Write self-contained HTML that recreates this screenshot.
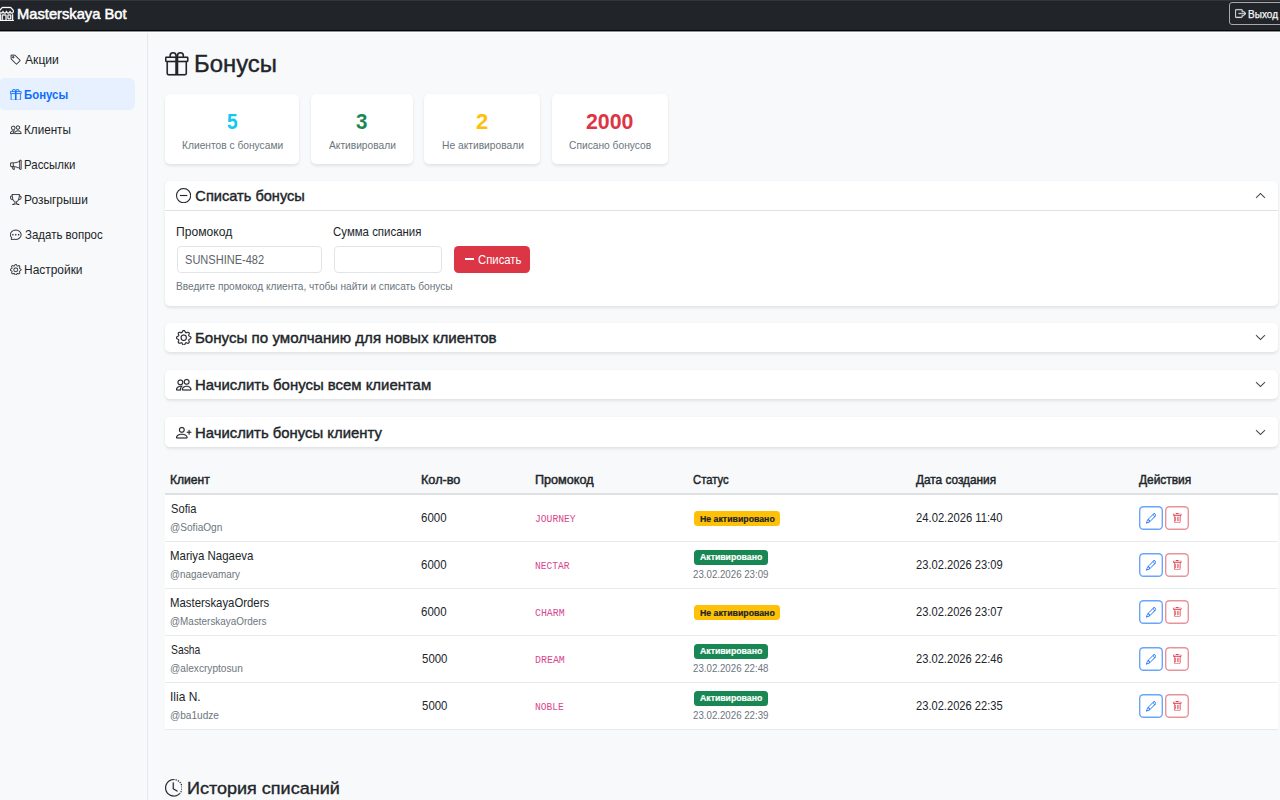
<!DOCTYPE html>
<html lang="ru">
<head>
<meta charset="utf-8">
<title>Masterskaya Bot — Бонусы</title>
<style>
*{box-sizing:border-box;margin:0;padding:0}
html,body{width:1280px;height:800px;overflow:hidden}
body{position:relative;background:#f8f9fa;font-family:"Liberation Sans",sans-serif;color:#212529}
.a{position:absolute;display:block}
.t{position:absolute;white-space:nowrap;line-height:1}
#nav{position:absolute;left:0;top:0;width:1280px;height:33px;background:#212529}
#nav .top{position:absolute;left:0;top:0;width:1280px;height:1px;background:#33373b}
#nav .b1{position:absolute;left:0;top:30px;width:1280px;height:1px;background:#05070a}
#nav .b2{position:absolute;left:0;top:31px;width:1280px;height:1px;background:#8c8e90}
#nav .b3{position:absolute;left:0;top:32px;width:1280px;height:1px;background:#fff}
#logout{position:absolute;left:1229px;top:2px;width:70px;height:23px;border:1px solid #a7a9ab;border-radius:3px}
#side{position:absolute;left:0;top:33px;width:148px;height:767px;background:#f8f9fa;border-right:1px solid #e6e8eb}
.pill{position:absolute;background:#e6f0fe;border-radius:6px}
.card{position:absolute;background:#fff;border-radius:5px;box-shadow:0 1.5px 3px rgba(0,0,0,.09)}
.inp{position:absolute;background:#fff;border:1px solid #e2e5e8;border-radius:4px}
.badge{position:absolute;height:15px;border-radius:3.5px}
.bw{background:#ffc107}
.bs{background:#198754}
.be{position:absolute;width:24px;height:24px;box-shadow:inset 0 0 0 1.4px #6aa5fd;border-radius:4.5px}
.bd{position:absolute;width:24px;height:24px;box-shadow:inset 0 0 0 1.4px #e8939a;border-radius:4.5px}

</style>
</head>
<body>
<div id="nav"><div class="top"></div>
<svg class="a" style="left:-1px;top:5.5px;" width="15" height="15" viewBox="0 0 16 16" fill="#fff" stroke="#fff" stroke-width="0.35"><path d="M2.97 1.35A1 1 0 0 1 3.73 1h8.54a1 1 0 0 1 .76.35l2.609 3.044A1.5 1.5 0 0 1 16 5.37v.255a2.375 2.375 0 0 1-4.25 1.458A2.37 2.37 0 0 1 9.875 8 2.37 2.37 0 0 1 8 7.083 2.37 2.37 0 0 1 6.125 8a2.37 2.37 0 0 1-1.875-.917A2.375 2.375 0 0 1 0 5.625V5.37a1.5 1.5 0 0 1 .361-.976zm1.78 4.275a1.375 1.375 0 0 0 2.75 0 .5.5 0 0 1 1 0 1.375 1.375 0 0 0 2.75 0 .5.5 0 0 1 1 0 1.375 1.375 0 1 0 2.75 0V5.37a.5.5 0 0 0-.12-.325L12.27 2H3.73L1.12 5.045A.5.5 0 0 0 1 5.37v.255a1.375 1.375 0 0 0 2.75 0 .5.5 0 0 1 1 0M1.5 8.5A.5.5 0 0 1 2 9v6h1v-5a1 1 0 0 1 1-1h3a1 1 0 0 1 1 1v5h6V9a.5.5 0 0 1 1 0v6h.5a.5.5 0 0 1 0 1H.5a.5.5 0 0 1 0-1H1V9a.5.5 0 0 1 .5-.5M4 15h3v-5H4zm5-5a1 1 0 0 1 1-1h2a1 1 0 0 1 1 1v3a1 1 0 0 1-1 1h-2a1 1 0 0 1-1-1zm3 0h-2v3h2z"/></svg>
<div class="t" style='left:17.01px;top:6.75px;font-size:14.5px;color:#fff;transform:scaleX(1.0151);transform-origin:1.19px 0;-webkit-text-stroke:0.5px #fff;'>Masterskaya Bot</div>
<div id="logout"></div>
<svg class="a" style="left:1234.5px;top:8px;" width="11" height="11" viewBox="0 0 16 16" fill="#e9ecef" stroke="#e9ecef" stroke-width="0.7"><path d="M10 12.5a.5.5 0 0 1-.5.5h-8a.5.5 0 0 1-.5-.5v-9a.5.5 0 0 1 .5-.5h8a.5.5 0 0 1 .5.5v2a.5.5 0 0 0 1 0v-2A1.5 1.5 0 0 0 9.5 2h-8A1.5 1.5 0 0 0 0 3.5v9A1.5 1.5 0 0 0 1.5 14h8a1.5 1.5 0 0 0 1.5-1.5v-2a.5.5 0 0 0-1 0z"/><path d="M15.854 8.354a.5.5 0 0 0 0-.708l-3-3a.5.5 0 0 0-.708.708L14.293 7.5H5.5a.5.5 0 0 0 0 1h8.793l-2.147 2.146a.5.5 0 0 0 .708.708z"/></svg>
<div class="t" style='left:1248.10px;top:8.80px;font-size:11px;color:#f8f9fa;transform:scaleX(0.9113);transform-origin:0.90px 0;-webkit-text-stroke:0.25px #f8f9fa;'>Выход</div>
<div class="b1"></div><div class="b2"></div><div class="b3"></div></div>
<div id="side"></div>
<div class="pill" style="left:-1px;top:78px;width:136px;height:32px"></div>
<svg class="a" style="left:10px;top:53.5px;" width="11.5" height="11.5" viewBox="0 0 16 16" fill="#212529" stroke="#212529" stroke-width="0.2"><path d="M6 4.5a1.5 1.5 0 1 1-3 0 1.5 1.5 0 0 1 3 0m-1 0a.5.5 0 1 0-1 0 .5.5 0 0 0 1 0"/><path d="M2 1h4.586a1 1 0 0 1 .707.293l7 7a1 1 0 0 1 0 1.414l-4.586 4.586a1 1 0 0 1-1.414 0l-7-7A1 1 0 0 1 1 6.586V2a1 1 0 0 1 1-1m0 5.586 7 7L13.586 9l-7-7H2z"/></svg>
<div class="t" style='left:24.98px;top:53.90px;font-size:12.2px;color:#212529;transform:scaleX(0.9944);transform-origin:0.02px 0;'>Акции</div>
<svg class="a" style="left:10px;top:88.5px;" width="11.5" height="11.5" viewBox="0 0 16 16" fill="#0d6efd" stroke="#0d6efd" stroke-width="0.2"><path d="M3 2.5a2.5 2.5 0 0 1 5 0 2.5 2.5 0 0 1 5 0v.006c0 .07 0 .27-.038.494H15a1 1 0 0 1 1 1v2a1 1 0 0 1-1 1v7.5a1.5 1.5 0 0 1-1.5 1.5h-11A1.5 1.5 0 0 1 1 14.5V7a1 1 0 0 1-1-1V4a1 1 0 0 1 1-1h2.038A3 3 0 0 1 3 2.506zm1.068.5H7v-.5a1.5 1.5 0 1 0-3 0c0 .085.002.274.045.43zM9 3h2.932l.023-.07c.043-.156.045-.345.045-.43a1.5 1.5 0 0 0-3 0zM1 4v2h6V4zm8 0v2h6V4zm5 3H9v8h4.5a.5.5 0 0 0 .5-.5zm-7 8V7H2v7.5a.5.5 0 0 0 .5.5z"/></svg>
<div class="t" style='left:24.18px;top:88.90px;font-size:12.2px;color:#0d6efd;font-weight:700;transform:scaleX(0.9329);transform-origin:0.82px 0;'>Бонусы</div>
<svg class="a" style="left:10px;top:123.5px;" width="11.5" height="11.5" viewBox="0 0 16 16" fill="#212529" stroke="#212529" stroke-width="0.2"><path d="M15 14s1 0 1-1-1-4-5-4-5 3-5 4 1 1 1 1zm-7.978-1L7 12.996c.001-.264.167-1.03.76-1.72C8.312 10.629 9.282 10 11 10c1.717 0 2.687.63 3.24 1.276.593.69.758 1.457.76 1.72l-.008.002-.014.002zM11 7a2 2 0 1 0 0-4 2 2 0 0 0 0 4m3-2a3 3 0 1 1-6 0 3 3 0 0 1 6 0M6.936 9.28a6 6 0 0 0-1.23-.247A7 7 0 0 0 5 9c-4 0-5 3-5 4q0 1 1 1h4.216A2.24 2.24 0 0 1 5 13c0-1.01.377-2.042 1.09-2.904.243-.294.526-.569.846-.816M4.92 10A5.5 5.5 0 0 0 4 13H1c0-.26.164-1.03.76-1.724.545-.636 1.492-1.256 3.16-1.275ZM1.5 5.5a3 3 0 1 1 6 0 3 3 0 0 1-6 0m3-2a2 2 0 1 0 0 4 2 2 0 0 0 0-4"/></svg>
<div class="t" style='left:24.00px;top:123.90px;font-size:12.2px;color:#212529;transform:scaleX(0.9570);transform-origin:1.00px 0;'>Клиенты</div>
<svg class="a" style="left:10px;top:158.5px;" width="11.5" height="11.5" viewBox="0 0 16 16" fill="#212529" stroke="#212529" stroke-width="0.2"><path d="M13 2.5a1.5 1.5 0 0 1 3 0v11a1.5 1.5 0 0 1-3 0v-.214c-2.162-1.241-4.49-1.843-6.912-2.083l.405 2.712A1 1 0 0 1 5.51 15.1h-.548a1 1 0 0 1-.916-.599l-1.85-3.49-.202-.003A2.014 2.014 0 0 1 0 9V7a2.02 2.02 0 0 1 1.992-2.013 75 75 0 0 0 2.483-.075c3.043-.154 6.148-.849 8.525-2.199zm1 0v11a.5.5 0 0 0 1 0v-11a.5.5 0 0 0-1 0m-1 1.35c-2.344 1.205-5.209 1.842-8 2.033v4.233q.27.015.537.036c2.568.189 5.093.744 7.463 1.993zm-9 6.215v-4.13a95 95 0 0 1-1.992.052A1.02 1.02 0 0 0 1 7v2c0 .55.448 1.002 1.006 1.009A61 61 0 0 1 4 10.065m-.657.975 1.609 3.037.01.024h.548l-.002-.014-.443-2.966a68 68 0 0 0-1.722-.082z"/></svg>
<div class="t" style='left:24.00px;top:158.90px;font-size:12.2px;color:#212529;transform:scaleX(0.9365);transform-origin:1.00px 0;'>Рассылки</div>
<svg class="a" style="left:10px;top:193.5px;" width="11.5" height="11.5" viewBox="0 0 16 16" fill="#212529" stroke="#212529" stroke-width="0.2"><path d="M2.5.5A.5.5 0 0 1 3 0h10a.5.5 0 0 1 .5.5q0 .807-.034 1.536a3 3 0 1 1-1.133 5.89c-.79 1.865-1.878 2.777-2.833 3.011v2.173l1.425.356c.194.048.377.135.537.255L13.3 15.1a.5.5 0 0 1-.3.9H3a.5.5 0 0 1-.3-.9l1.838-1.379c.16-.12.343-.207.537-.255L6.5 13.11v-2.173c-.955-.234-2.043-1.146-2.833-3.012a3 3 0 1 1-1.132-5.89A33 33 0 0 1 2.5.5m.099 2.54a2 2 0 0 0 .72 3.935c-.333-1.05-.588-2.346-.72-3.935m10.083 3.935a2 2 0 0 0 .72-3.935c-.133 1.59-.388 2.885-.72 3.935M3.504 1q.01.775.056 1.469c.13 2.028.457 3.546.87 4.667C5.294 9.48 6.484 10 7 10a.5.5 0 0 1 .5.5v2.61a1 1 0 0 1-.757.97l-1.426.356a.5.5 0 0 0-.179.085L4.5 15h7l-.638-.479a.5.5 0 0 0-.18-.085l-1.425-.356a1 1 0 0 1-.757-.97V10.5A.5.5 0 0 1 9 10c.516 0 1.706-.52 2.57-2.864.413-1.12.74-2.64.87-4.667q.045-.694.056-1.469z"/></svg>
<div class="t" style='left:24.00px;top:193.90px;font-size:12.2px;color:#212529;transform:scaleX(0.9794);transform-origin:1.00px 0;'>Розыгрыши</div>
<svg class="a" style="left:10px;top:228.5px;" width="11.5" height="11.5" viewBox="0 0 16 16" fill="#212529" stroke="#212529" stroke-width="0.2"><path d="M5 8a1 1 0 1 1-2 0 1 1 0 0 1 2 0m4 0a1 1 0 1 1-2 0 1 1 0 0 1 2 0m3 1a1 1 0 1 0 0-2 1 1 0 0 0 0 2"/><path d="m2.165 15.803.02-.004c1.83-.363 2.948-.842 3.468-1.105A9 9 0 0 0 8 15c4.418 0 8-3.134 8-7s-3.582-7-8-7-8 3.134-8 7c0 1.76.743 3.37 1.97 4.6a10.4 10.4 0 0 1-.524 2.318l-.003.011a11 11 0 0 1-.244.637c-.079.186.074.394.273.362a22 22 0 0 0 .693-.125m.8-3.108a1 1 0 0 0-.287-.801C1.618 10.83 1 9.468 1 8c0-3.192 3.004-6 7-6s7 2.808 7 6-3.004 6-7 6a8 8 0 0 1-2.088-.272 1 1 0 0 0-.711.074c-.387.196-1.24.57-2.634.893a11 11 0 0 0 .398-2"/></svg>
<div class="t" style='left:24.60px;top:228.90px;font-size:12.2px;color:#212529;transform:scaleX(0.9422);transform-origin:0.40px 0;'>Задать вопрос</div>
<svg class="a" style="left:10px;top:263.5px;" width="11.5" height="11.5" viewBox="0 0 16 16" fill="#212529" stroke="#212529" stroke-width="0.2"><path d="M8 4.754a3.246 3.246 0 1 0 0 6.492 3.246 3.246 0 0 0 0-6.492M5.754 8a2.246 2.246 0 1 1 4.492 0 2.246 2.246 0 0 1-4.492 0"/><path d="M9.796 1.343c-.527-1.79-3.065-1.79-3.592 0l-.094.319a.873.873 0 0 1-1.255.52l-.292-.16c-1.64-.892-3.433.902-2.54 2.541l.159.292a.873.873 0 0 1-.52 1.255l-.319.094c-1.79.527-1.79 3.065 0 3.592l.319.094a.873.873 0 0 1 .52 1.255l-.16.292c-.892 1.64.901 3.434 2.541 2.54l.292-.159a.873.873 0 0 1 1.255.52l.094.319c.527 1.79 3.065 1.79 3.592 0l.094-.319a.873.873 0 0 1 1.255-.52l.292.16c1.64.893 3.434-.902 2.54-2.541l-.159-.292a.873.873 0 0 1 .52-1.255l.319-.094c1.79-.527 1.79-3.065 0-3.592l-.319-.094a.873.873 0 0 1-.52-1.255l.16-.292c.893-1.64-.902-3.433-2.541-2.54l-.292.159a.873.873 0 0 1-1.255-.52zm-2.633.283c.246-.835 1.428-.835 1.674 0l.094.319a1.873 1.873 0 0 0 2.693 1.115l.291-.16c.764-.415 1.6.42 1.184 1.185l-.159.292a1.873 1.873 0 0 0 1.116 2.692l.318.094c.835.246.835 1.428 0 1.674l-.319.094a1.873 1.873 0 0 0-1.115 2.693l.16.291c.415.764-.42 1.6-1.185 1.184l-.291-.159a1.873 1.873 0 0 0-2.693 1.116l-.094.318c-.246.835-1.428.835-1.674 0l-.094-.319a1.873 1.873 0 0 0-2.692-1.115l-.292.16c-.764.415-1.6-.42-1.184-1.185l.159-.291A1.873 1.873 0 0 0 1.945 8.93l-.319-.094c-.835-.246-.835-1.428 0-1.674l.319-.094A1.873 1.873 0 0 0 3.06 4.377l-.16-.292c-.415-.764.42-1.6 1.185-1.184l.292.159a1.873 1.873 0 0 0 2.692-1.115z"/></svg>
<div class="t" style='left:24.00px;top:263.90px;font-size:12.2px;color:#212529;transform:scaleX(0.9791);transform-origin:1.00px 0;'>Настройки</div>
<svg class="a" style="left:165px;top:52px;" width="23.5" height="23.5" viewBox="0 0 16 16" fill="#212529" stroke="#212529" stroke-width="0.08"><path d="M3 2.5a2.5 2.5 0 0 1 5 0 2.5 2.5 0 0 1 5 0v.006c0 .07 0 .27-.038.494H15a1 1 0 0 1 1 1v2a1 1 0 0 1-1 1v7.5a1.5 1.5 0 0 1-1.5 1.5h-11A1.5 1.5 0 0 1 1 14.5V7a1 1 0 0 1-1-1V4a1 1 0 0 1 1-1h2.038A3 3 0 0 1 3 2.506zm1.068.5H7v-.5a1.5 1.5 0 1 0-3 0c0 .085.002.274.045.43zM9 3h2.932l.023-.07c.043-.156.045-.345.045-.43a1.5 1.5 0 0 0-3 0zM1 4v2h6V4zm8 0v2h6V4zm5 3H9v8h4.5a.5.5 0 0 0 .5-.5zm-7 8V7H2v7.5a.5.5 0 0 0 .5.5z"/></svg>
<div class="t" style='left:194.01px;top:52.03px;font-size:24.3px;color:#212529;transform:scaleX(0.9828);transform-origin:1.99px 0;-webkit-text-stroke:0.4px #212529;'>Бонусы</div>
<div class="card" style="left:165px;top:94px;width:134.0px;height:70px"></div>
<div class="t" style='left:227.03px;top:110.60px;font-size:21.8px;color:#0dcaf0;font-weight:700;transform:scaleX(0.8760);transform-origin:0.67px 0;'>5</div>
<div class="t" style='left:181.81px;top:139.55px;font-size:10.9px;color:#6c757d;transform:scaleX(0.9377);transform-origin:0.89px 0;'>Клиентов с бонусами</div>
<div class="card" style="left:311px;top:94px;width:101.5px;height:70px"></div>
<div class="t" style='left:356.30px;top:110.60px;font-size:21.8px;color:#198754;font-weight:700;transform:scaleX(0.9414);transform-origin:0.50px 0;'>3</div>
<div class="t" style='left:328.98px;top:139.55px;font-size:10.9px;color:#6c757d;transform:scaleX(0.9364);transform-origin:0.02px 0;'>Активировали</div>
<div class="card" style="left:424px;top:94px;width:116.0px;height:70px"></div>
<div class="t" style='left:476.14px;top:110.60px;font-size:21.8px;color:#ffc107;font-weight:700;transform:scaleX(1.0101);transform-origin:0.76px 0;'>2</div>
<div class="t" style='left:441.61px;top:139.55px;font-size:10.9px;color:#6c757d;transform:scaleX(0.9397);transform-origin:0.89px 0;'>Не активировали</div>
<div class="card" style="left:551.5px;top:94px;width:116.5px;height:70px"></div>
<div class="t" style='left:586.14px;top:110.60px;font-size:21.8px;color:#dc3545;font-weight:700;transform:scaleX(0.9778);transform-origin:0.76px 0;'>2000</div>
<div class="t" style='left:569.15px;top:139.55px;font-size:10.9px;color:#6c757d;transform:scaleX(0.9380);transform-origin:0.55px 0;'>Списано бонусов</div>
<div class="card" style="left:165px;top:181px;width:1113px;height:124.5px"></div>
<div class="a" style="left:165px;top:210px;width:1113px;height:1px;background:#e0e1e2"></div>
<svg class="a" style="left:176px;top:188px;" width="15.2" height="15.2" viewBox="0 0 16 16" fill="#212529" stroke="#212529" stroke-width="0.15"><path d="M8 15A7 7 0 1 1 8 1a7 7 0 0 1 0 14m0 1A8 8 0 1 0 8 0a8 8 0 0 0 0 16"/><path d="M4 8a.5.5 0 0 1 .5-.5h7a.5.5 0 0 1 0 1h-7A.5.5 0 0 1 4 8"/></svg>
<div class="t" style='left:195.36px;top:188.70px;font-size:14.6px;color:#212529;-webkit-text-stroke:0.4px #212529;'>Списать бонусы</div>
<svg class="a" style="left:1255px;top:190px;" width="11" height="11" viewBox="0 0 16 16" fill="#212529" stroke="#212529" stroke-width="0.3"><path fill-rule="evenodd" d="M7.646 4.646a.5.5 0 0 1 .708 0l6 6a.5.5 0 0 1-.708.708L8 5.707l-5.646 5.647a.5.5 0 0 1-.708-.708z"/></svg>
<div class="t" style='left:176.01px;top:225.90px;font-size:12.2px;color:#212529;transform:scaleX(0.9934);transform-origin:0.99px 0;'>Промокод</div>
<div class="t" style='left:333.38px;top:225.90px;font-size:12.2px;color:#212529;transform:scaleX(0.9383);transform-origin:0.62px 0;'>Сумма списания</div>
<div class="inp" style="left:177px;top:246px;width:145px;height:27px"></div>
<div class="inp" style="left:334px;top:246px;width:108px;height:27px"></div>
<div class="t" style='left:185.45px;top:253.90px;font-size:12.2px;color:#5c636a;transform:scaleX(0.9048);transform-origin:0.55px 0;'>SUNSHINE-482</div>
<div class="a" style="left:454px;top:245.5px;width:76px;height:27.5px;background:#dc3545;border-radius:4.5px"></div>
<div class="a" style="left:465px;top:258px;width:8.5px;height:1.8px;background:#fff"></div>
<div class="t" style='left:477.78px;top:253.90px;font-size:12.2px;color:#fff;transform:scaleX(0.9271);transform-origin:0.62px 0;'>Списать</div>
<div class="t" style='left:176.14px;top:280.75px;font-size:10.5px;color:#6c757d;transform:scaleX(0.9642);transform-origin:0.86px 0;'>Введите промокод клиента, чтобы найти и списать бонусы</div>
<div class="card" style="left:165px;top:322.8px;width:1113px;height:29.3px"></div>
<svg class="a" style="left:176px;top:329.5px;" width="15.5" height="15.5" viewBox="0 0 16 16" fill="#212529" stroke="#212529" stroke-width="0.15"><path d="M8 4.754a3.246 3.246 0 1 0 0 6.492 3.246 3.246 0 0 0 0-6.492M5.754 8a2.246 2.246 0 1 1 4.492 0 2.246 2.246 0 0 1-4.492 0"/><path d="M9.796 1.343c-.527-1.79-3.065-1.79-3.592 0l-.094.319a.873.873 0 0 1-1.255.52l-.292-.16c-1.64-.892-3.433.902-2.54 2.541l.159.292a.873.873 0 0 1-.52 1.255l-.319.094c-1.79.527-1.79 3.065 0 3.592l.319.094a.873.873 0 0 1 .52 1.255l-.16.292c-.892 1.64.901 3.434 2.541 2.54l.292-.159a.873.873 0 0 1 1.255.52l.094.319c.527 1.79 3.065 1.79 3.592 0l.094-.319a.873.873 0 0 1 1.255-.52l.292.16c1.64.893 3.434-.902 2.54-2.541l-.159-.292a.873.873 0 0 1 .52-1.255l.319-.094c1.79-.527 1.79-3.065 0-3.592l-.319-.094a.873.873 0 0 1-.52-1.255l.16-.292c.893-1.64-.902-3.433-2.541-2.54l-.292.159a.873.873 0 0 1-1.255-.52zm-2.633.283c.246-.835 1.428-.835 1.674 0l.094.319a1.873 1.873 0 0 0 2.693 1.115l.291-.16c.764-.415 1.6.42 1.184 1.185l-.159.292a1.873 1.873 0 0 0 1.116 2.692l.318.094c.835.246.835 1.428 0 1.674l-.319.094a1.873 1.873 0 0 0-1.115 2.693l.16.291c.415.764-.42 1.6-1.185 1.184l-.291-.159a1.873 1.873 0 0 0-2.693 1.116l-.094.318c-.246.835-1.428.835-1.674 0l-.094-.319a1.873 1.873 0 0 0-2.692-1.115l-.292.16c-.764.415-1.6-.42-1.184-1.185l.159-.291A1.873 1.873 0 0 0 1.945 8.93l-.319-.094c-.835-.246-.835-1.428 0-1.674l.319-.094A1.873 1.873 0 0 0 3.06 4.377l-.16-.292c-.415-.764.42-1.6 1.185-1.184l.292.159a1.873 1.873 0 0 0 2.692-1.115z"/></svg>
<div class="t" style='left:194.80px;top:330.70px;font-size:14.6px;color:#212529;transform:scaleX(1.0352);transform-origin:1.20px 0;-webkit-text-stroke:0.4px #212529;'>Бонусы по умолчанию для новых клиентов</div>
<svg class="a" style="left:1255px;top:332px;" width="11" height="11" viewBox="0 0 16 16" fill="#212529" stroke="#212529" stroke-width="0.35"><path fill-rule="evenodd" d="M1.646 4.646a.5.5 0 0 1 .708 0L8 10.293l5.646-5.647a.5.5 0 0 1 .708.708l-6 6a.5.5 0 0 1-.708 0l-6-6a.5.5 0 0 1 0-.708"/></svg>
<div class="card" style="left:165px;top:370.2px;width:1113px;height:29.3px"></div>
<svg class="a" style="left:176px;top:376.5px;" width="15.5" height="15.5" viewBox="0 0 16 16" fill="#212529" stroke="#212529" stroke-width="0.15"><path d="M15 14s1 0 1-1-1-4-5-4-5 3-5 4 1 1 1 1zm-7.978-1L7 12.996c.001-.264.167-1.03.76-1.72C8.312 10.629 9.282 10 11 10c1.717 0 2.687.63 3.24 1.276.593.69.758 1.457.76 1.72l-.008.002-.014.002zM11 7a2 2 0 1 0 0-4 2 2 0 0 0 0 4m3-2a3 3 0 1 1-6 0 3 3 0 0 1 6 0M6.936 9.28a6 6 0 0 0-1.23-.247A7 7 0 0 0 5 9c-4 0-5 3-5 4q0 1 1 1h4.216A2.24 2.24 0 0 1 5 13c0-1.01.377-2.042 1.09-2.904.243-.294.526-.569.846-.816M4.92 10A5.5 5.5 0 0 0 4 13H1c0-.26.164-1.03.76-1.724.545-.636 1.492-1.256 3.16-1.275ZM1.5 5.5a3 3 0 1 1 6 0 3 3 0 0 1-6 0m3-2a2 2 0 1 0 0 4 2 2 0 0 0 0-4"/></svg>
<div class="t" style='left:194.80px;top:377.70px;font-size:14.6px;color:#212529;transform:scaleX(1.0221);transform-origin:1.20px 0;-webkit-text-stroke:0.4px #212529;'>Начислить бонусы всем клиентам</div>
<svg class="a" style="left:1255px;top:379px;" width="11" height="11" viewBox="0 0 16 16" fill="#212529" stroke="#212529" stroke-width="0.35"><path fill-rule="evenodd" d="M1.646 4.646a.5.5 0 0 1 .708 0L8 10.293l5.646-5.647a.5.5 0 0 1 .708.708l-6 6a.5.5 0 0 1-.708 0l-6-6a.5.5 0 0 1 0-.708"/></svg>
<div class="card" style="left:165px;top:417.4px;width:1113px;height:29.3px"></div>
<svg class="a" style="left:176px;top:424.5px;" width="15.5" height="15.5" viewBox="0 0 16 16" fill="#212529" stroke="#212529" stroke-width="0.15"><path d="M6 8a3 3 0 1 0 0-6 3 3 0 0 0 0 6m2-3a2 2 0 1 1-4 0 2 2 0 0 1 4 0m4 8c0 1-1 1-1 1H1s-1 0-1-1 1-4 6-4 6 3 6 4m-1-.004c-.001-.246-.154-.986-.832-1.664C9.516 10.68 8.289 10 6 10s-3.516.68-4.168 1.332c-.678.678-.83 1.418-.832 1.664z"/><path fill-rule="evenodd" d="M13.5 5a.5.5 0 0 1 .5.5V7h1.5a.5.5 0 0 1 0 1H14v1.5a.5.5 0 0 1-1 0V8h-1.5a.5.5 0 0 1 0-1H13V5.5a.5.5 0 0 1 .5-.5"/></svg>
<div class="t" style='left:194.80px;top:425.70px;font-size:14.6px;color:#212529;transform:scaleX(1.0186);transform-origin:1.20px 0;-webkit-text-stroke:0.4px #212529;'>Начислить бонусы клиенту</div>
<svg class="a" style="left:1255px;top:427px;" width="11" height="11" viewBox="0 0 16 16" fill="#212529" stroke="#212529" stroke-width="0.35"><path fill-rule="evenodd" d="M1.646 4.646a.5.5 0 0 1 .708 0L8 10.293l5.646-5.647a.5.5 0 0 1 .708.708l-6 6a.5.5 0 0 1-.708 0l-6-6a.5.5 0 0 1 0-.708"/></svg>
<div class="a" style="left:165px;top:494px;width:1113px;height:236px;background:#fff"></div>
<div class="a" style="left:165px;top:493px;width:1113px;height:2px;background:#dfe0e2"></div>
<div class="t" style='left:170.01px;top:473.95px;font-size:12.1px;color:#212529;-webkit-text-stroke:0.45px #212529;'>Клиент</div>
<div class="t" style='left:420.91px;top:473.95px;font-size:12.1px;color:#212529;transform:scaleX(1.0498);transform-origin:0.99px 0;-webkit-text-stroke:0.45px #212529;'>Кол-во</div>
<div class="t" style='left:535.02px;top:473.95px;font-size:12.1px;color:#212529;transform:scaleX(1.0448);transform-origin:0.98px 0;-webkit-text-stroke:0.45px #212529;'>Промокод</div>
<div class="t" style='left:693.14px;top:473.95px;font-size:12.1px;color:#212529;transform:scaleX(0.9290);transform-origin:0.61px 0;-webkit-text-stroke:0.45px #212529;'>Статус</div>
<div class="t" style='left:916.21px;top:473.95px;font-size:12.1px;color:#212529;transform:scaleX(0.9774);transform-origin:0.09px 0;-webkit-text-stroke:0.45px #212529;'>Дата создания</div>
<div class="t" style='left:1138.81px;top:473.95px;font-size:12.1px;color:#212529;transform:scaleX(0.9854);transform-origin:0.09px 0;-webkit-text-stroke:0.45px #212529;'>Действия</div>
<div class="a" style="left:165px;top:541px;width:1113px;height:1px;background:#e9eaeb"></div>
<div class="t" style='left:170.65px;top:502.90px;font-size:12.2px;color:#212529;transform:scaleX(0.9109);transform-origin:0.55px 0;'>Sofia</div>
<div class="t" style='left:170.35px;top:521.60px;font-size:10.8px;color:#6c757d;transform:scaleX(0.9334);transform-origin:0.85px 0;'>@SofiaOgn</div>
<div class="t" style='left:421.38px;top:511.90px;font-size:12.2px;color:#212529;transform:scaleX(0.9417);transform-origin:0.62px 0;'>6000</div>
<div class="t" style='left:535.12px;top:515.03px;font-size:10.2px;color:#d9468f;font-family:"Liberation Mono",monospace;transform:scaleX(0.9465);transform-origin:0.88px 0;'>JOURNEY</div>
<div class="badge bw" style="left:694px;top:511px;width:86px"></div>
<div class="t" style='left:699.60px;top:514.55px;font-size:8.9px;color:#212529;font-weight:700;transform:scaleX(0.9859);transform-origin:0.60px 0;-webkit-text-stroke:0.2px #212529;'>Не активировано</div>
<div class="t" style='left:915.89px;top:511.90px;font-size:12.2px;color:#212529;transform:scaleX(0.9205);transform-origin:0.61px 0;'>24.02.2026 11:40</div>
<div class="be" style="left:1139px;top:506px"></div>
<svg class="a" style="left:1145.5px;top:513px;" width="10.5" height="10.5" viewBox="0 0 16 16" fill="#0d6efd" stroke="#0d6efd" stroke-width="0.1"><path d="M12.146.146a.5.5 0 0 1 .708 0l3 3a.5.5 0 0 1 0 .708l-10 10a.5.5 0 0 1-.168.11l-5 2a.5.5 0 0 1-.65-.65l2-5a.5.5 0 0 1 .11-.168zM11.207 2.5 13.5 4.793 14.793 3.5 12.5 1.207zm1.586 3L10.5 3.207 4 9.707V10h.5a.5.5 0 0 1 .5.5v.5h.5a.5.5 0 0 1 .5.5v.5h.293zm-9.761 5.175-.106.106-1.528 3.821 3.821-1.528.106-.106A.5.5 0 0 1 5 12.5V12h-.5a.5.5 0 0 1-.5-.5V11h-.5a.5.5 0 0 1-.468-.325"/></svg>
<div class="bd" style="left:1165px;top:506px"></div>
<svg class="a" style="left:1172px;top:513px;" width="10.5" height="10.5" viewBox="0 0 16 16" fill="#dc3545"><path d="M5.5 5.5A.5.5 0 0 1 6 6v6a.5.5 0 0 1-1 0V6a.5.5 0 0 1 .5-.5m2.5 0a.5.5 0 0 1 .5.5v6a.5.5 0 0 1-1 0V6a.5.5 0 0 1 .5-.5m3 .5a.5.5 0 0 0-1 0v6a.5.5 0 0 0 1 0z"/><path d="M14.5 3a1 1 0 0 1-1 1H13v9a2 2 0 0 1-2 2H5a2 2 0 0 1-2-2V4h-.5a1 1 0 0 1-1-1V2a1 1 0 0 1 1-1H6a1 1 0 0 1 1-1h2a1 1 0 0 1 1 1h3.5a1 1 0 0 1 1 1zM4.118 4 4 4.059V13a1 1 0 0 0 1 1h6a1 1 0 0 0 1-1V4.059L11.882 4zM2.5 3h11V2h-11z"/></svg>
<div class="a" style="left:165px;top:588px;width:1113px;height:1px;background:#e9eaeb"></div>
<div class="t" style='left:170.20px;top:549.90px;font-size:12.2px;color:#212529;transform:scaleX(0.9391);transform-origin:1.00px 0;'>Mariya Nagaeva</div>
<div class="t" style='left:170.35px;top:568.60px;font-size:10.8px;color:#6c757d;transform:scaleX(0.9164);transform-origin:0.85px 0;'>@nagaevamary</div>
<div class="t" style='left:421.38px;top:558.90px;font-size:12.2px;color:#212529;transform:scaleX(0.9417);transform-origin:0.62px 0;'>6000</div>
<div class="t" style='left:535.19px;top:562.03px;font-size:10.2px;color:#d9468f;font-family:"Liberation Mono",monospace;transform:scaleX(0.9406);transform-origin:0.81px 0;'>NECTAR</div>
<div class="badge bs" style="left:694px;top:550px;width:73.5px"></div>
<div class="t" style='left:699.58px;top:552.55px;font-size:8.9px;color:#fff;font-weight:700;transform:scaleX(0.9810);transform-origin:0.22px 0;-webkit-text-stroke:0.2px #fff;'>Активировано</div>
<div class="t" style='left:693.48px;top:570.02px;font-size:10.4px;color:#6c757d;transform:scaleX(0.9327);transform-origin:0.52px 0;'>23.02.2026 23:09</div>
<div class="t" style='left:915.89px;top:558.90px;font-size:12.2px;color:#212529;transform:scaleX(0.9126);transform-origin:0.61px 0;'>23.02.2026 23:09</div>
<div class="be" style="left:1139px;top:553px"></div>
<svg class="a" style="left:1145.5px;top:560px;" width="10.5" height="10.5" viewBox="0 0 16 16" fill="#0d6efd" stroke="#0d6efd" stroke-width="0.1"><path d="M12.146.146a.5.5 0 0 1 .708 0l3 3a.5.5 0 0 1 0 .708l-10 10a.5.5 0 0 1-.168.11l-5 2a.5.5 0 0 1-.65-.65l2-5a.5.5 0 0 1 .11-.168zM11.207 2.5 13.5 4.793 14.793 3.5 12.5 1.207zm1.586 3L10.5 3.207 4 9.707V10h.5a.5.5 0 0 1 .5.5v.5h.5a.5.5 0 0 1 .5.5v.5h.293zm-9.761 5.175-.106.106-1.528 3.821 3.821-1.528.106-.106A.5.5 0 0 1 5 12.5V12h-.5a.5.5 0 0 1-.5-.5V11h-.5a.5.5 0 0 1-.468-.325"/></svg>
<div class="bd" style="left:1165px;top:553px"></div>
<svg class="a" style="left:1172px;top:560px;" width="10.5" height="10.5" viewBox="0 0 16 16" fill="#dc3545"><path d="M5.5 5.5A.5.5 0 0 1 6 6v6a.5.5 0 0 1-1 0V6a.5.5 0 0 1 .5-.5m2.5 0a.5.5 0 0 1 .5.5v6a.5.5 0 0 1-1 0V6a.5.5 0 0 1 .5-.5m3 .5a.5.5 0 0 0-1 0v6a.5.5 0 0 0 1 0z"/><path d="M14.5 3a1 1 0 0 1-1 1H13v9a2 2 0 0 1-2 2H5a2 2 0 0 1-2-2V4h-.5a1 1 0 0 1-1-1V2a1 1 0 0 1 1-1H6a1 1 0 0 1 1-1h2a1 1 0 0 1 1 1h3.5a1 1 0 0 1 1 1zM4.118 4 4 4.059V13a1 1 0 0 0 1 1h6a1 1 0 0 0 1-1V4.059L11.882 4zM2.5 3h11V2h-11z"/></svg>
<div class="a" style="left:165px;top:635px;width:1113px;height:1px;background:#e9eaeb"></div>
<div class="t" style='left:170.20px;top:596.90px;font-size:12.2px;color:#212529;transform:scaleX(0.9315);transform-origin:1.00px 0;'>MasterskayaOrders</div>
<div class="t" style='left:170.35px;top:615.60px;font-size:10.8px;color:#6c757d;transform:scaleX(0.9171);transform-origin:0.85px 0;'>@MasterskayaOrders</div>
<div class="t" style='left:421.38px;top:605.90px;font-size:12.2px;color:#212529;transform:scaleX(0.9417);transform-origin:0.62px 0;'>6000</div>
<div class="t" style='left:535.44px;top:609.03px;font-size:10.2px;color:#d9468f;font-family:"Liberation Mono",monospace;transform:scaleX(0.9674);transform-origin:0.56px 0;'>CHARM</div>
<div class="badge bw" style="left:694px;top:605px;width:86px"></div>
<div class="t" style='left:699.60px;top:608.55px;font-size:8.9px;color:#212529;font-weight:700;transform:scaleX(0.9859);transform-origin:0.60px 0;-webkit-text-stroke:0.2px #212529;'>Не активировано</div>
<div class="t" style='left:915.89px;top:605.90px;font-size:12.2px;color:#212529;transform:scaleX(0.9129);transform-origin:0.61px 0;'>23.02.2026 23:07</div>
<div class="be" style="left:1139px;top:600px"></div>
<svg class="a" style="left:1145.5px;top:607px;" width="10.5" height="10.5" viewBox="0 0 16 16" fill="#0d6efd" stroke="#0d6efd" stroke-width="0.1"><path d="M12.146.146a.5.5 0 0 1 .708 0l3 3a.5.5 0 0 1 0 .708l-10 10a.5.5 0 0 1-.168.11l-5 2a.5.5 0 0 1-.65-.65l2-5a.5.5 0 0 1 .11-.168zM11.207 2.5 13.5 4.793 14.793 3.5 12.5 1.207zm1.586 3L10.5 3.207 4 9.707V10h.5a.5.5 0 0 1 .5.5v.5h.5a.5.5 0 0 1 .5.5v.5h.293zm-9.761 5.175-.106.106-1.528 3.821 3.821-1.528.106-.106A.5.5 0 0 1 5 12.5V12h-.5a.5.5 0 0 1-.5-.5V11h-.5a.5.5 0 0 1-.468-.325"/></svg>
<div class="bd" style="left:1165px;top:600px"></div>
<svg class="a" style="left:1172px;top:607px;" width="10.5" height="10.5" viewBox="0 0 16 16" fill="#dc3545"><path d="M5.5 5.5A.5.5 0 0 1 6 6v6a.5.5 0 0 1-1 0V6a.5.5 0 0 1 .5-.5m2.5 0a.5.5 0 0 1 .5.5v6a.5.5 0 0 1-1 0V6a.5.5 0 0 1 .5-.5m3 .5a.5.5 0 0 0-1 0v6a.5.5 0 0 0 1 0z"/><path d="M14.5 3a1 1 0 0 1-1 1H13v9a2 2 0 0 1-2 2H5a2 2 0 0 1-2-2V4h-.5a1 1 0 0 1-1-1V2a1 1 0 0 1 1-1H6a1 1 0 0 1 1-1h2a1 1 0 0 1 1 1h3.5a1 1 0 0 1 1 1zM4.118 4 4 4.059V13a1 1 0 0 0 1 1h6a1 1 0 0 0 1-1V4.059L11.882 4zM2.5 3h11V2h-11z"/></svg>
<div class="a" style="left:165px;top:682px;width:1113px;height:1px;background:#e9eaeb"></div>
<div class="t" style='left:170.65px;top:643.90px;font-size:12.2px;color:#212529;transform:scaleX(0.8470);transform-origin:0.55px 0;'>Sasha</div>
<div class="t" style='left:170.35px;top:662.60px;font-size:10.8px;color:#6c757d;transform:scaleX(0.9378);transform-origin:0.85px 0;'>@alexcryptosun</div>
<div class="t" style='left:421.51px;top:652.90px;font-size:12.2px;color:#212529;transform:scaleX(0.9370);transform-origin:0.49px 0;'>5000</div>
<div class="t" style='left:535.19px;top:656.03px;font-size:10.2px;color:#d9468f;font-family:"Liberation Mono",monospace;transform:scaleX(0.9755);transform-origin:0.81px 0;'>DREAM</div>
<div class="badge bs" style="left:694px;top:644px;width:73.5px"></div>
<div class="t" style='left:699.58px;top:646.55px;font-size:8.9px;color:#fff;font-weight:700;transform:scaleX(0.9810);transform-origin:0.22px 0;-webkit-text-stroke:0.2px #fff;'>Активировано</div>
<div class="t" style='left:693.48px;top:664.02px;font-size:10.4px;color:#6c757d;transform:scaleX(0.9322);transform-origin:0.52px 0;'>23.02.2026 22:48</div>
<div class="t" style='left:915.89px;top:652.90px;font-size:12.2px;color:#212529;transform:scaleX(0.9122);transform-origin:0.61px 0;'>23.02.2026 22:46</div>
<div class="be" style="left:1139px;top:647px"></div>
<svg class="a" style="left:1145.5px;top:654px;" width="10.5" height="10.5" viewBox="0 0 16 16" fill="#0d6efd" stroke="#0d6efd" stroke-width="0.1"><path d="M12.146.146a.5.5 0 0 1 .708 0l3 3a.5.5 0 0 1 0 .708l-10 10a.5.5 0 0 1-.168.11l-5 2a.5.5 0 0 1-.65-.65l2-5a.5.5 0 0 1 .11-.168zM11.207 2.5 13.5 4.793 14.793 3.5 12.5 1.207zm1.586 3L10.5 3.207 4 9.707V10h.5a.5.5 0 0 1 .5.5v.5h.5a.5.5 0 0 1 .5.5v.5h.293zm-9.761 5.175-.106.106-1.528 3.821 3.821-1.528.106-.106A.5.5 0 0 1 5 12.5V12h-.5a.5.5 0 0 1-.5-.5V11h-.5a.5.5 0 0 1-.468-.325"/></svg>
<div class="bd" style="left:1165px;top:647px"></div>
<svg class="a" style="left:1172px;top:654px;" width="10.5" height="10.5" viewBox="0 0 16 16" fill="#dc3545"><path d="M5.5 5.5A.5.5 0 0 1 6 6v6a.5.5 0 0 1-1 0V6a.5.5 0 0 1 .5-.5m2.5 0a.5.5 0 0 1 .5.5v6a.5.5 0 0 1-1 0V6a.5.5 0 0 1 .5-.5m3 .5a.5.5 0 0 0-1 0v6a.5.5 0 0 0 1 0z"/><path d="M14.5 3a1 1 0 0 1-1 1H13v9a2 2 0 0 1-2 2H5a2 2 0 0 1-2-2V4h-.5a1 1 0 0 1-1-1V2a1 1 0 0 1 1-1H6a1 1 0 0 1 1-1h2a1 1 0 0 1 1 1h3.5a1 1 0 0 1 1 1zM4.118 4 4 4.059V13a1 1 0 0 0 1 1h6a1 1 0 0 0 1-1V4.059L11.882 4zM2.5 3h11V2h-11z"/></svg>
<div class="a" style="left:165px;top:729px;width:1113px;height:1px;background:#e9eaeb"></div>
<div class="t" style='left:170.07px;top:690.90px;font-size:12.2px;color:#212529;transform:scaleX(0.9822);transform-origin:1.13px 0;'>Ilia N.</div>
<div class="t" style='left:170.35px;top:709.60px;font-size:10.8px;color:#6c757d;transform:scaleX(0.9323);transform-origin:0.85px 0;'>@ba1udze</div>
<div class="t" style='left:421.51px;top:699.90px;font-size:12.2px;color:#212529;transform:scaleX(0.9370);transform-origin:0.49px 0;'>5000</div>
<div class="t" style='left:535.19px;top:703.03px;font-size:10.2px;color:#d9468f;font-family:"Liberation Mono",monospace;transform:scaleX(0.9409);transform-origin:0.81px 0;'>NOBLE</div>
<div class="badge bs" style="left:694px;top:691px;width:73.5px"></div>
<div class="t" style='left:699.58px;top:693.55px;font-size:8.9px;color:#fff;font-weight:700;transform:scaleX(0.9810);transform-origin:0.22px 0;-webkit-text-stroke:0.2px #fff;'>Активировано</div>
<div class="t" style='left:693.48px;top:711.02px;font-size:10.4px;color:#6c757d;transform:scaleX(0.9327);transform-origin:0.52px 0;'>23.02.2026 22:39</div>
<div class="t" style='left:915.89px;top:699.90px;font-size:12.2px;color:#212529;transform:scaleX(0.9119);transform-origin:0.61px 0;'>23.02.2026 22:35</div>
<div class="be" style="left:1139px;top:694px"></div>
<svg class="a" style="left:1145.5px;top:701px;" width="10.5" height="10.5" viewBox="0 0 16 16" fill="#0d6efd" stroke="#0d6efd" stroke-width="0.1"><path d="M12.146.146a.5.5 0 0 1 .708 0l3 3a.5.5 0 0 1 0 .708l-10 10a.5.5 0 0 1-.168.11l-5 2a.5.5 0 0 1-.65-.65l2-5a.5.5 0 0 1 .11-.168zM11.207 2.5 13.5 4.793 14.793 3.5 12.5 1.207zm1.586 3L10.5 3.207 4 9.707V10h.5a.5.5 0 0 1 .5.5v.5h.5a.5.5 0 0 1 .5.5v.5h.293zm-9.761 5.175-.106.106-1.528 3.821 3.821-1.528.106-.106A.5.5 0 0 1 5 12.5V12h-.5a.5.5 0 0 1-.5-.5V11h-.5a.5.5 0 0 1-.468-.325"/></svg>
<div class="bd" style="left:1165px;top:694px"></div>
<svg class="a" style="left:1172px;top:701px;" width="10.5" height="10.5" viewBox="0 0 16 16" fill="#dc3545"><path d="M5.5 5.5A.5.5 0 0 1 6 6v6a.5.5 0 0 1-1 0V6a.5.5 0 0 1 .5-.5m2.5 0a.5.5 0 0 1 .5.5v6a.5.5 0 0 1-1 0V6a.5.5 0 0 1 .5-.5m3 .5a.5.5 0 0 0-1 0v6a.5.5 0 0 0 1 0z"/><path d="M14.5 3a1 1 0 0 1-1 1H13v9a2 2 0 0 1-2 2H5a2 2 0 0 1-2-2V4h-.5a1 1 0 0 1-1-1V2a1 1 0 0 1 1-1H6a1 1 0 0 1 1-1h2a1 1 0 0 1 1 1h3.5a1 1 0 0 1 1 1zM4.118 4 4 4.059V13a1 1 0 0 0 1 1h6a1 1 0 0 0 1-1V4.059L11.882 4zM2.5 3h11V2h-11z"/></svg>
<svg class="a" style="left:164.7px;top:779px;" width="17.6" height="17.6" viewBox="0 0 16 16" fill="#212529" stroke="#212529" stroke-width="0.1"><path d="M8.515 1.019A7 7 0 0 0 8 1V0a8 8 0 0 1 .589.022zm2.004.45a7 7 0 0 0-.985-.299l.219-.976q.576.129 1.126.342zm1.37.71a7 7 0 0 0-.439-.27l.493-.87a8 8 0 0 1 .979.654l-.615.789a7 7 0 0 0-.418-.302zm1.834 1.79a7 7 0 0 0-.653-.796l.724-.69q.406.429.747.91zm.744 1.352a7 7 0 0 0-.214-.468l.893-.45a8 8 0 0 1 .45 1.088l-.95.313a7 7 0 0 0-.179-.483m.53 2.507a7 7 0 0 0-.1-1.025l.985-.17q.1.58.116 1.17zm-.131 1.538q.05-.254.081-.51l.993.123a8 8 0 0 1-.23 1.155l-.964-.267q.069-.247.12-.501m-.952 2.379q.276-.436.486-.908l.914.405q-.24.54-.555 1.038zm-.964 1.205q.183-.183.35-.378l.758.653a8 8 0 0 1-.401.432z"/><path d="M8 1a7 7 0 1 0 4.95 11.95l.707.707A8.001 8.001 0 1 1 8 0z"/><path d="M7.5 3a.5.5 0 0 1 .5.5v5.21l3.248 1.856a.5.5 0 0 1-.496.868l-3.5-2A.5.5 0 0 1 7 9V3.5a.5.5 0 0 1 .5-.5"/></svg>
<div class="t" style='left:186.89px;top:780.03px;font-size:17.2px;color:#212529;transform:scaleX(1.0484);transform-origin:1.41px 0;-webkit-text-stroke:0.35px #212529;'>История списаний</div>
</body>
</html>
